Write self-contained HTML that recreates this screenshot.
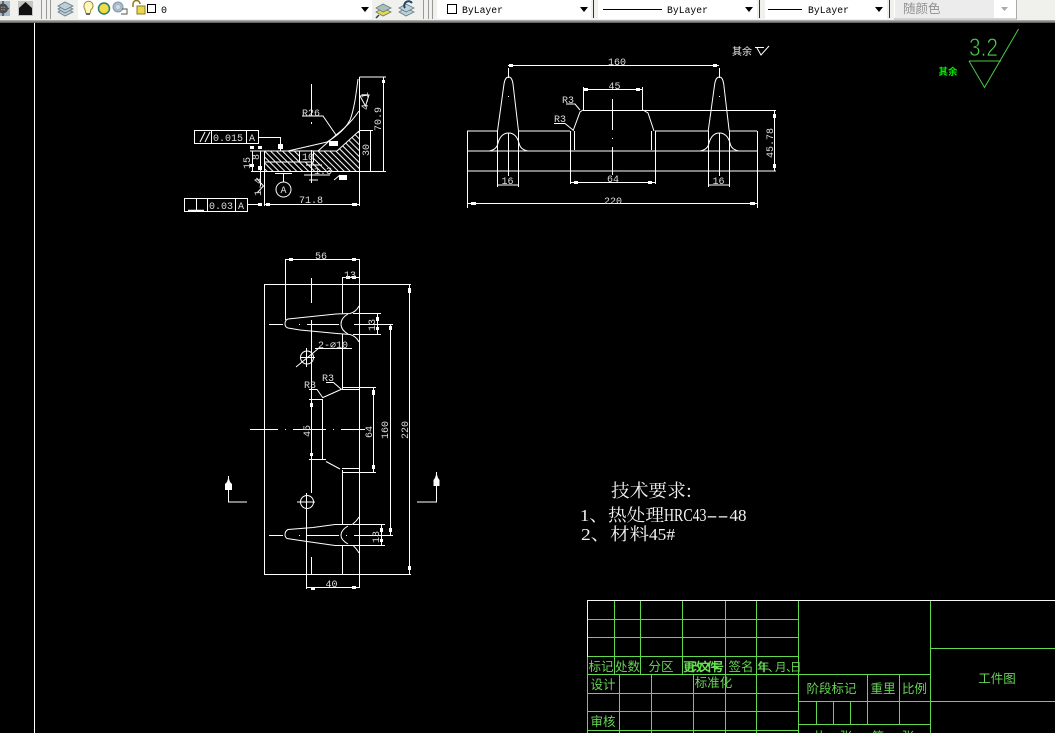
<!DOCTYPE html>
<html><head><meta charset="utf-8"><style>
html,body{margin:0;padding:0;background:#000;width:1055px;height:733px;overflow:hidden}
svg{display:block}
.w{stroke:#fff;stroke-width:1;fill:none}
.g{stroke:#62d84e;stroke-width:1;fill:none}
.t{font-family:"Liberation Mono",monospace;font-size:10px;fill:#ddd;text-anchor:middle}
.c{font-family:"Liberation Serif","Noto Serif CJK SC",serif;font-size:17px;fill:#f2f2f2}
.gt{font-family:"Liberation Sans","Noto Sans CJK SC",sans-serif;font-size:12.5px;fill:#66d455;text-anchor:middle}
.b{font-family:"Liberation Mono",monospace;font-size:10px;fill:#000}
</style></head><body>
<svg width="1055" height="733" viewBox="0 0 1055 733" xmlns="http://www.w3.org/2000/svg">
<defs>
<pattern id="h" width="4.2" height="4.2" patternUnits="userSpaceOnUse" patternTransform="rotate(-45)"><rect width="4.2" height="4.2" fill="#000"/><rect width="1" height="4.2" fill="#fff"/></pattern>
</defs>
<rect width="1055" height="733" fill="#000"/>
<!-- toolbar -->
<rect width="1055" height="21" fill="#f0f0ec"/>
<rect y="20" width="1055" height="1.5" fill="#aaa"/>
<rect y="21.5" width="1055" height="1.5" fill="#666"/>
<rect x="78" y="0" width="294" height="19" fill="#fff"/>
<rect x="437" y="0" width="154" height="19" fill="#fff"/>
<rect x="598" y="0" width="159" height="19" fill="#fff"/>
<rect x="765" y="0" width="122" height="19" fill="#fff"/>
<rect x="894" y="0" width="122" height="19" fill="#fff"/>
<rect x="895" y="0" width="99" height="18" fill="#ececec"/>
<path d="M1016.5 0V19H894" stroke="#aaa" fill="none"/>
<!-- separators -->
<g stroke="#999" fill="none"><path d="M41.500 0V19M46.500 0V19M50.500 0V19M423.500 0V19M428.500 0V19M432.500 0V19"/></g>
<path d="M593.500 0V18M759.500 0V18M889.500 0V18" stroke="#333"/>
<!-- left icons -->
<rect x="0" y="1" width="10" height="15" fill="#a8bccc"/><circle cx="3" cy="8.500" r="5" fill="#4a4a4a"/><circle cx="3" cy="8.500" r="2" fill="#c8d4dc"/><path d="M3 1V16M-2 8.500H9" stroke="#4a4a4a" stroke-width="1.500"/>
<rect x="18" y="1" width="15" height="15" fill="#c4c4c0"/><path d="M19 15V8L25.500 2 32 8V15Z" fill="#111"/>
<g fill="#bcd0d8" stroke="#667a88" stroke-width=".8"><path d="M58 12 65 8 73 12 65 16Z"/><path d="M58 9 65 5 73 9 65 13Z"/><path d="M58 6 65 2 73 6 65 10Z"/></g>
<path d="M84 6a4.500 4.500 0 1 1 7 3.500l-1 4h-4l-1-4A4.500 4.500 0 0 1 84 6Z" fill="#fff9c0" stroke="#998a30"/><rect x="86" y="13" width="4" height="2" fill="#667"/>
<circle cx="104" cy="8.500" r="5.500" fill="#eedd44" stroke="#2c7a70" stroke-width="1.500"/>
<circle cx="118" cy="7" r="5" fill="#a8bcd0" stroke="#8899aa"/><circle cx="118" cy="7" r="2" fill="#d8d8e0"/><path d="M122 9h5v5h-6" fill="none" stroke="#555"/>
<path d="M133 7V4a3.500 3.500 0 0 1 7 0" fill="none" stroke="#8a7a20" stroke-width="1.500"/><rect x="137" y="6" width="8" height="8" fill="#e8d850" stroke="#8a7a20"/>
<rect x="147.500" y="4.500" width="8" height="8" fill="#fff" stroke="#000"/>
<text x="161" y="13" class="b" font-size="10">0</text>
<path d="M361 7h8l-4 5Z" fill="#000"/>
<g fill="#e8d850" stroke="#667a60" stroke-width=".8"><path d="M376 12 383 8 391 12 383 16Z"/></g><g fill="#a8c0b8" stroke="#667a88" stroke-width=".8"><path d="M376 8 383 4 391 8 383 12Z"/></g><path d="M376 18l3-3" stroke="#246" stroke-width="1.500"/>
<g fill="#bcd0d8" stroke="#667a88" stroke-width=".8"><path d="M399 12 406 8 414 12 406 16Z"/><path d="M399 8 406 4 414 8 406 12Z"/></g><path d="M405 8a4 4 0 0 1 7-5" fill="none" stroke="#246" stroke-width="2"/>
<rect x="447.500" y="4.500" width="9" height="9" fill="#fff" stroke="#000"/>
<text x="462" y="13" class="b" textLength="41" lengthAdjust="spacingAndGlyphs">ByLayer</text>
<path d="M580 7h8l-4 5Z" fill="#000"/>
<path d="M603 9.500H662" stroke="#000"/>
<text x="667" y="13" class="b" textLength="41" lengthAdjust="spacingAndGlyphs">ByLayer</text>
<path d="M745 7h8l-4 5Z" fill="#000"/>
<path d="M768 9.500H802" stroke="#000"/>
<text x="808" y="13" class="b" textLength="41" lengthAdjust="spacingAndGlyphs">ByLayer</text>
<path d="M875 7h8l-4 5Z" fill="#000"/>
<text x="903" y="13" font-family="'Noto Sans CJK SC',sans-serif" font-size="12.500" fill="#909090">随颜色</text>
<path d="M1001 7h7l-3.500 4Z" fill="#aaa"/>
<!-- UCS line -->
<path d="M34.500 23V733" stroke="#fff"/>

<!-- LEFT VIEW -->
<path d="M264 151H300V162H313V151H337L359 131V172H264Z" fill="url(#h)"/>
<g class="w">
<path d="M359.500 77V206M359.500 77H386M251 171.500H386M359 130.500H373M383.500 77V172M370.500 131V172"/>
<path d="M358 79C356 95 354 110 350 120 346 128 337 136 327 142L288 151"/>
<path d="M359 111C353 120 345 128 336 135L318 151"/>
<path d="M264.500 151V206M250 151H337L359 131M299.500 151V162H313.500V151M264 162H300"/>
<path d="M252.500 151V172M260.500 151V186"/>
<path d="M311.500 84V116M311.500 122V124M311.500 150V183M304 175H330M306 165H322M309 180H318"/>
<path d="M194.500 130.500H258.500V143.500H194.500ZM211.500 131V143M246.500 131V143M200 142 205 132M205 142 210 132"/>
<path d="M258 137.500H280.500V151"/>
<path d="M184.500 198.500H247.500V211.500H184.500ZM196.500 198V211M207.500 198V211M235.500 198V211"/>
<path d="M188 210.500H204" stroke-width="1.500"/>
<path d="M247 204.500H262M264 204.500H359"/>
<circle cx="283.500" cy="189.500" r="7.500"/>
<path d="M283.500 173V182M275 173.500H292"/>
<path d="M256.500 178 263.500 186 257 193"/>
<path d="M302 116H323L336 135"/>
<path d="M334 180 340 175"/>
<path d="M360 96 369 95 365.500 106Z"/>
</g>
<g fill="#fff">
<rect x="278" y="144" width="5" height="5"/><rect x="250" y="146" width="4" height="3"/><rect x="250" y="164" width="4" height="3"/><rect x="258" y="146" width="4" height="3"/><rect x="258" y="166" width="4" height="4"/>
<rect x="258" y="203" width="4" height="3"/><rect x="266" y="203" width="4" height="3"/><rect x="352" y="203" width="5" height="3"/>
<rect x="329" y="141" width="9" height="5"/><rect x="339" y="175" width="8" height="5"/><rect x="382" y="80" width="3" height="3"/>
</g>
<text x="311" y="116" class="t" font-size="9">R26</text>
<text x="228" y="141" class="t" font-size="9.500">0.015</text><text x="252" y="141" class="t" font-size="9">A</text>
<text x="221" y="209" class="t" font-size="9.500">0.03</text><text x="241" y="209" class="t" font-size="9">A</text>
<text x="311" y="203" class="t">71.8</text>
<text x="283.500" y="193" class="t" font-size="10">A</text>
<text x="308" y="160" class="t" font-size="9">10</text>
<text x="323" y="174" class="t" font-size="9">1.3</text>
<text transform="translate(381,119) rotate(-90)" class="t">70.9</text>
<text transform="translate(369,150) rotate(-90)" class="t">30</text>
<text transform="translate(250,163) rotate(-90)" class="t">15</text>
<text transform="translate(259,157) rotate(-90)" class="t" font-size="8">8</text>
<text transform="translate(261,187) rotate(-90)" class="t" font-size="7">1.4</text>
<text transform="translate(368,101) rotate(-90)" class="t" font-size="7">4.1</text>

<!-- TOP RIGHT VIEW -->
<g class="w">
<path d="M467.500 131V208M757.500 131V208M467 151H757M467 171H776M467 131H497M518 131H570M655 131H708M729 131H757"/>
<path d="M497.500 131 504 84Q505 77 508.700 77 512 77 513 84L518.500 131"/>
<path d="M708.200 131 714.700 84Q715.700 77 719.400 77 722.700 77 723.700 84L729.200 131"/>
<path d="M489 151C494 150 497 148 498 143 500 136 504 133 508.700 133 513 133 517 136 519 143 520 148 523 150 528 151"/>
<path d="M700 151C705 150 708 148 709 143 711 136 715 133 719.400 133 724 133 728 136 730 143 731 148 734 150 739 151"/>
<path d="M497.500 131V187M518.500 131V187M708.500 131V187M729.500 131V187"/>
<path d="M508.500 68V78M719.500 68V78M508.500 133V176M719.500 133V176"/>
<path d="M497 185H518M708 185H729M467 203.500H757M508 65.500H719"/>
<path d="M583 110.500H776M583.500 87V110M642.500 87V110M583 89.500H643"/>
<path d="M583 110 580 112 573 131M643 110 648 113 654 131"/>
<path d="M570.500 131V184M574.500 131V150M651.500 131V150M655.500 131V184M570 182.500H655"/>
<path d="M612.500 99V130M612.500 147V175"/>
<path d="M566 104H575L580 110M554 123.500H565L573 130"/>
<path d="M774.500 110V171"/>
</g>
<g fill="#fff"><rect x="509" y="64" width="4" height="3"/><rect x="713" y="64" width="4" height="3"/><rect x="584" y="88" width="4" height="3"/><rect x="636" y="88" width="4" height="3"/><rect x="574" y="181" width="4" height="3"/><rect x="648" y="181" width="4" height="3"/><rect x="471" y="202" width="5" height="3"/><rect x="750" y="202" width="5" height="3"/><rect x="773" y="114" width="3" height="4"/><rect x="773" y="164" width="3" height="4"/><rect x="508" y="96" width="1" height="1"/><rect x="719" y="96" width="1" height="1"/><rect x="612" y="138" width="1" height="1"/></g>
<text x="617" y="65" class="t">160</text>
<text x="614.500" y="89" class="t">45</text>
<text x="568" y="103" class="t">R3</text>
<text x="560" y="122" class="t">R3</text>
<text x="507.500" y="184" class="t">16</text>
<text x="718.500" y="184" class="t">16</text>
<text x="613" y="182" class="t">64</text>
<text x="613" y="204" class="t">220</text>
<text transform="translate(773,143) rotate(-90)" class="t" font-size="10">45.78</text>
<text x="742" y="55" font-family="'Noto Sans CJK SC',sans-serif" font-size="10" fill="#eee" text-anchor="middle">其余</text>
<path d="M755 47.500H764M757 48 761 55 769 46" class="w"/>

<!-- BOTTOM VIEW -->
<g class="w">
<path d="M264.500 284.500H411M264.500 574.500H411M264.500 284V575M409.500 284V574"/>
<path d="M359.500 259V588M342.500 277V314M342.500 334V389M342.500 470V524M342.500 545V574M285.500 259V320M285 259.500H360M342 277.500H360"/>
<path d="M311.500 278V303M311.500 320V493M311.500 557V574"/>
<path d="M359 306Q356 312 350 313.500L336 314 288 319Q285 320 285 324 285 327 288 328L300 330 337 333.500 350 334.500Q356 336 359 342"/>
<path d="M348 314Q341 318 341 324 341 330 348 334"/>
<path d="M269 324.500H283M299 324.500H300M307 324.500H339M354 324.500H393"/>
<path d="M353 313.500H381M353 334.500H381M377.500 313V334M390.500 324V535M373.500 387V472"/>
<path d="M342 387.500H376M342 389.500H359M342 468.500H359M342 472.500H376"/>
<path d="M309 399.500H322M309 459.500H326M322.500 399V459M326 461.500 340 469M323 397.500 342 389"/>
<path d="M309 389.500H317L323 398M326 382.500H333.500L341 389"/>
<path d="M250 429.500H278M285 429.500H286M293 429.500H326M333 429.500H334M341 429.500H365"/>
<circle cx="307" cy="357.500" r="6.500"/>
<path d="M300 357.500H315M306.500 348V367M296 367 319 348M315 348.500H352"/>
<circle cx="307" cy="502" r="6.500"/>
<path d="M297 502H315M306.500 493V589M307 587.500H359"/>
<path d="M359 517Q356 522 352 524.500H335L313 527.500 288 529.500Q285 531 285 535 285 537 287 538.500L307 541.500 335 545.500H353Q356 548 359 553"/>
<path d="M348 526Q341 530 341 535.500 341 540 348 544"/>
<path d="M269 535.500H283M299 535.500H300M307 535.500H339M346 535.500H347M354 535.500H393"/>
<path d="M353 524.500H385M353 545.500H385M381.500 524V546"/>
<path d="M228.500 476V502H247M436.500 472V502H417"/>
</g>
<g fill="#fff"><path d="M228.500 477 230 482 232 484V490H225V484L227 482Z"/><path d="M436.500 473 438 478 439.500 480V486H433.500V480L435 478Z"/>
<rect x="289" y="258" width="4" height="3"/><rect x="352" y="258" width="4" height="3"/><rect x="346" y="276" width="4" height="3"/><rect x="352" y="276" width="4" height="3"/><rect x="408" y="288" width="3" height="5"/><rect x="408" y="566" width="3" height="4"/><rect x="376" y="317" width="3" height="4"/><rect x="376" y="327" width="3" height="3"/><rect x="389" y="326" width="3" height="4"/><rect x="389" y="528" width="3" height="4"/><rect x="372" y="390" width="3" height="5"/><rect x="372" y="465" width="3" height="4"/><rect x="310" y="403" width="3" height="4"/><rect x="310" y="453" width="3" height="3"/><rect x="380" y="528" width="3" height="4"/><rect x="380" y="539" width="3" height="3"/><rect x="311" y="587" width="4" height="3"/><rect x="352" y="586" width="4" height="3"/></g>
<text x="321" y="259" class="t">56</text>
<text x="350" y="278" class="t">13</text>
<text transform="translate(375,325) rotate(-90)" class="t">13</text>
<text x="333" y="348" class="t" font-size="9">2-⌀10</text>
<text x="310" y="388" class="t">R3</text>
<text x="328" y="381" class="t">R3</text>
<text transform="translate(310,431) rotate(-90)" class="t">45</text>
<text transform="translate(372,432) rotate(-90)" class="t">64</text>
<text transform="translate(388,430) rotate(-90)" class="t">160</text>
<text transform="translate(408,430) rotate(-90)" class="t">220</text>
<text transform="translate(379,537) rotate(-90)" class="t">13</text>
<text x="331.500" y="587" class="t">40</text>

<!-- technical notes -->
<text x="611" y="497" class="c" textLength="81" lengthAdjust="spacingAndGlyphs" style="font-size:18px;font-family:'Noto Serif CJK SC',serif">技术要求:</text>
<text x="580" y="521" class="c" textLength="84" lengthAdjust="spacingAndGlyphs">1、热处理</text>
<text x="664" y="521" class="c" textLength="42.500" lengthAdjust="spacingAndGlyphs" style="font-size:18px">HRC43</text>
<text x="706.500" y="521" class="c" textLength="22" lengthAdjust="spacingAndGlyphs">--</text>
<text x="729.500" y="521" class="c" textLength="17" lengthAdjust="spacingAndGlyphs">48</text>
<text x="581" y="540" class="c" textLength="68" lengthAdjust="spacingAndGlyphs">2、材料</text>
<text x="649" y="540" class="c" textLength="26" lengthAdjust="spacingAndGlyphs">45#</text>

<!-- green surface symbol -->
<text x="969" y="56" font-family="'Liberation Sans',sans-serif" font-size="25" fill="#4ccf4c" stroke="#000" stroke-width=".7" textLength="29" lengthAdjust="spacingAndGlyphs">3.2</text>
<path d="M969 61H1001M969 61 984.500 87.500 1018.500 29" stroke="#46c846" fill="none"/>
<text x="948" y="75" font-family="'Noto Sans CJK SC',sans-serif" font-weight="700" font-size="9.500" fill="#00f000" text-anchor="middle">其余</text>

<!-- title block -->
<g class="g">
<path d="M614.500 600V674M640.500 600V674M682.500 600V674M725.500 600V674M756.500 600V674M798.500 600V733"/>
<path d="M587 619.500H798M587 637.500H798M587 656.500H798M587 674.500H931"/>
<path d="M619.500 674V733M651.500 674V733M693.500 674V733M725.500 674V733M756.500 674V733"/>
<path d="M587 693.500H798M587 711.500H798M587 730.500H798"/>
<path d="M930.500 600V733M931 648.500H1055M798 701.500H1055M798 724.500H931"/>
<path d="M867.500 674V724M899.500 674V724M816.500 702V724M833.500 702V724M850.500 702V724"/>
<path d="M587.500 656V733"/>
</g>
<path d="M587 600.500H1055M587.500 600V657" stroke="#f4f4f4" fill="none"/>
<g class="gt">
<text x="601" y="671">标记</text><text x="627.500" y="671" font-size="12.500">处数</text><text x="661" y="671">分区</text>
<text x="741" y="671">签名</text>
<text x="603" y="689">设计</text><text x="713.500" y="687">标准化</text>
<text x="603" y="726">审核</text>
<text x="831.500" y="693">阶段标记</text><text x="883" y="693">重里</text><text x="914.500" y="693">比例</text>
<text x="997" y="683">工件图</text>
<text x="819" y="741">共</text><text x="846" y="741">张</text><text x="878" y="741">第</text><text x="908" y="741">张</text>
</g>
<text x="683 691 699 707 712" y="671" font-family="'Noto Sans CJK SC',sans-serif" font-size="12" font-weight="700" fill="#66e050">更改文件号</text>
<text x="757 768 775 786 790" y="671" font-family="'Noto Sans CJK SC',sans-serif" font-size="11.500" fill="#66d455">年、月、日</text>
<text x="758" y="671" font-family="'Noto Sans CJK SC',sans-serif" font-size="11.500" fill="#66d455">年</text>
</svg>
</body></html>
